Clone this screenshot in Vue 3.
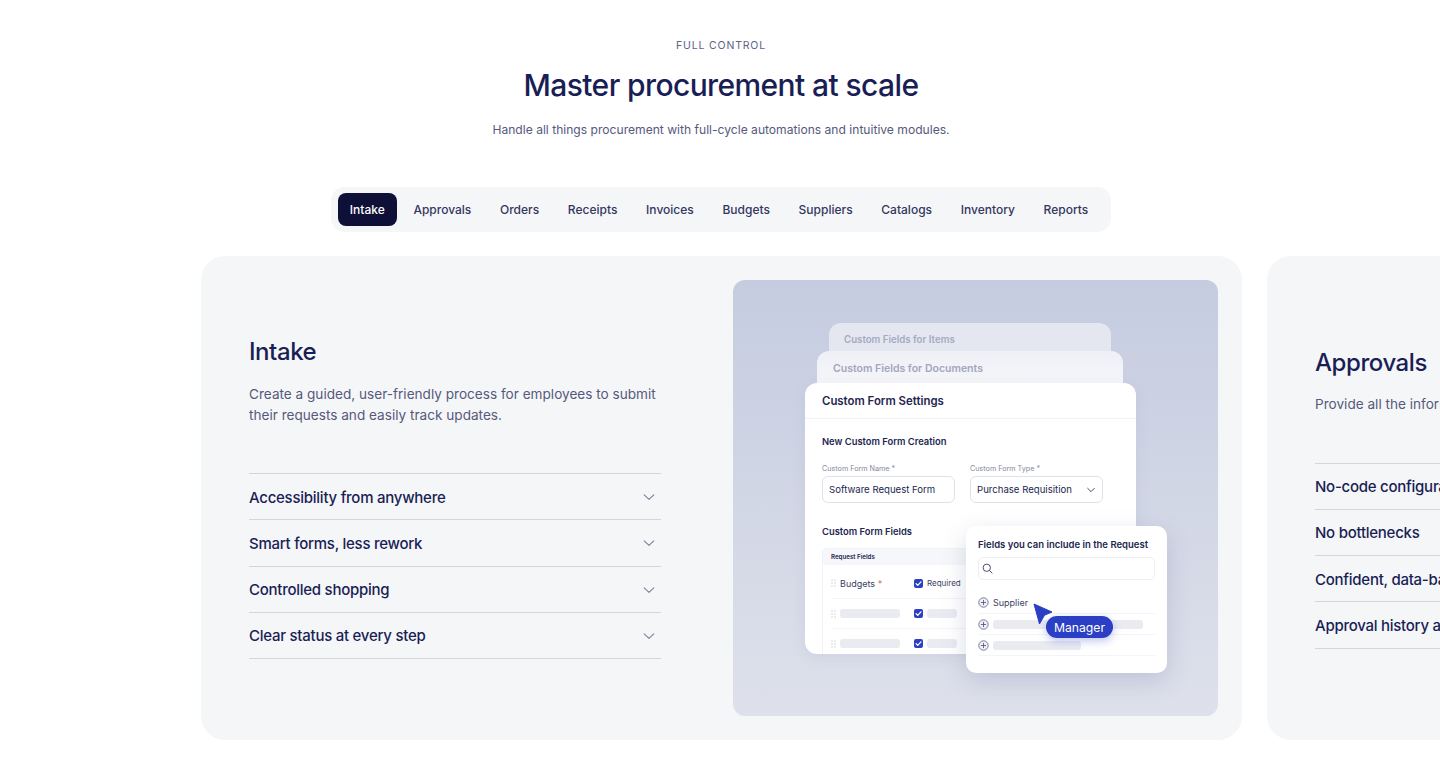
<template>
  <div class="page">
    <div class="top">
      <header class="intro">
        <p class="eyebrow">FULL CONTROL</p>
        <h1>Master procurement at scale</h1>
        <p class="lead">Handle all things procurement with full-cycle automations and intuitive modules.</p>
      </header>

      <nav class="tabs">
        <button v-for="tab in tabs" :key="tab" :class="['tab', { active: tab === activeTab }]">{{ tab }}</button>
      </nav>
    </div>

    <div class="slides">
      <section v-for="slide in slides" :key="slide.title" class="slide">
        <div class="slide-copy">
          <h2>{{ slide.title }}</h2>
          <p class="slide-desc">{{ slide.desc }}</p>
          <ul class="features">
            <li v-for="item in slide.items" :key="item">
              <span>{{ item }}</span>
              <svg class="chev" width="12" height="12" viewBox="0 0 12 12" fill="none">
                <path d="M1.2 3.8L6 8.4l4.8-4.6" stroke="#7d8199" stroke-width="1.1" stroke-linecap="round" stroke-linejoin="round" />
              </svg>
            </li>
          </ul>
        </div>

        <div class="visual">
          <template v-if="slide.title === 'Intake'">
            <div class="back back-items">Custom Fields for Items</div>
            <div class="back back-docs">Custom Fields for Documents</div>

            <div class="form-card">
              <div class="form-head">Custom Form Settings</div>
              <div class="form-body">
                <div class="form-sub">New Custom Form Creation</div>
                <div class="form-row">
                  <div class="field">
                    <label>Custom Form Name *</label>
                    <div class="input">Software Request Form</div>
                  </div>
                  <div class="field">
                    <label>Custom Form Type *</label>
                    <div class="input">
                      Purchase Requisition
                      <svg width="10" height="10" viewBox="0 0 12 12" fill="none">
                        <path d="M2 4l4 4 4-4" stroke="#4a4e6e" stroke-width="1.2" stroke-linecap="round" stroke-linejoin="round" />
                      </svg>
                    </div>
                  </div>
                </div>
                <div class="form-sub fields-title">Custom Form Fields</div>
                <div class="field-table">
                  <div class="table-head">Request Fields</div>
                  <div v-for="(row, i) in 3" :key="row" class="table-row">
                    <svg class="grip" width="5" height="8" viewBox="0 0 5 8" fill="#c6c9d6">
                      <circle cx="1" cy="1" r=".7" /><circle cx="4" cy="1" r=".7" />
                      <circle cx="1" cy="4" r=".7" /><circle cx="4" cy="4" r=".7" />
                      <circle cx="1" cy="7" r=".7" /><circle cx="4" cy="7" r=".7" />
                    </svg>
                    <span v-if="i === 0" class="row-name">Budgets <em>*</em></span>
                    <span v-else class="skel skel-name"></span>
                    <span class="check">
                      <svg width="7" height="7" viewBox="0 0 10 10" fill="none">
                        <path d="M1.5 5.2l2.4 2.4 4.6-5" stroke="#fff" stroke-width="1.8" stroke-linecap="round" stroke-linejoin="round" />
                      </svg>
                    </span>
                    <span v-if="i === 0" class="row-req">Required</span>
                    <span v-else class="skel skel-req"></span>
                  </div>
                </div>
              </div>
            </div>

            <div class="picker">
              <div class="picker-title">Fields you can include in the Request</div>
              <div class="search">
                <svg width="11" height="11" viewBox="0 0 12 12" fill="none">
                  <circle cx="5.2" cy="5.2" r="4" stroke="#3c4060" stroke-width="1" />
                  <path d="M8.2 8.2l2.8 2.8" stroke="#3c4060" stroke-width="1" stroke-linecap="round" />
                </svg>
              </div>
              <div v-for="(opt, i) in pickerRows" :key="i" class="pick-row">
                <svg width="11" height="11" viewBox="0 0 11 11" fill="none">
                  <circle cx="5.5" cy="5.5" r="4.7" fill="#eef0f5" stroke="#6d7190" stroke-width=".9" />
                  <path d="M5.5 3.3v4.4M3.3 5.5h4.4" stroke="#5a5e80" stroke-width=".9" stroke-linecap="round" />
                </svg>
                <span v-if="opt.label" class="pick-label">{{ opt.label }}</span>
                <span v-else class="skel" :style="{ width: opt.bar + 'px' }"></span>
              </div>
              <svg class="cursor" width="20" height="22" viewBox="0 0 20 22">
                <path d="M1 1l18 8-7.5 3.2L6.5 21z" fill="#2a3fc4" stroke="#2a3fc4" stroke-linejoin="round" />
              </svg>
              <span class="tag">Manager</span>
            </div>
          </template>
        </div>
      </section>
    </div>
  </div>
</template>

<script setup>
const activeTab = 'Intake'

const tabs = ['Intake', 'Approvals', 'Orders', 'Receipts', 'Invoices', 'Budgets', 'Suppliers', 'Catalogs', 'Inventory', 'Reports']

const slides = [
  {
    title: 'Intake',
    desc: 'Create a guided, user-friendly process for employees to submit their requests and easily track updates.',
    items: ['Accessibility from anywhere', 'Smart forms, less rework', 'Controlled shopping', 'Clear status at every step']
  },
  {
    title: 'Approvals',
    desc: 'Provide all the information approvers need in one place.',
    items: ['No-code configurable workflows', 'No bottlenecks', 'Confident, data-backed decisions', 'Approval history and audit trail']
  }
]

const pickerRows = [{ label: 'Supplier' }, { bar: 150 }, { bar: 88 }]
</script>

<style>
html,
body {
  margin: 0;
  background: #fff;
  overflow: hidden;
}
</style>

<style scoped>
.page {
  width: 1440px;
  height: 768px;
  overflow: hidden;
  font-family: Inter, "Liberation Sans", sans-serif;
  color: #191e55;
}

.top {
  padding-left: 2px;
}

.intro {
  text-align: center;
  padding-top: 39px;
}

.eyebrow {
  margin: 0;
  font-size: 10.5px;
  line-height: 13px;
  letter-spacing: 0.08em;
  color: #5d6285;
}

h1 {
  margin: 12px 0 0;
  font-size: 30px;
  line-height: 42px;
  font-weight: 500;
  letter-spacing: -0.02em;
}

.lead {
  margin: 14.5px 0 0;
  font-size: 12.1px;
  line-height: 18px;
  color: #55597c;
}

.tabs {
  display: flex;
  width: max-content;
  gap: 4.7px;
  margin: 48.5px auto 0;
  padding: 6px 11px 6px 7px;
  background: #f5f6f8;
  border-radius: 14px;
}

.tab {
  height: 33px;
  padding: 0 12px;
  border: 0;
  border-radius: 8px;
  background: transparent;
  font: 500 12px Inter, sans-serif;
  color: #33375f;
}

.tab.active {
  background: #0e1038;
  color: #fff;
}

.slides {
  display: flex;
  gap: 25px;
  margin-top: 24px;
  padding-left: 201px;
}

.slide {
  flex: none;
  display: flex;
  justify-content: space-between;
  align-items: center;
  box-sizing: border-box;
  width: 1041px;
  height: 484px;
  padding: 24px 24px 24px 48px;
  background: #f5f6f8;
  border-radius: 24px;
}

.slide-copy {
  width: 412px;
  padding-bottom: 1px;
}

h2 {
  margin: 0;
  font-size: 24px;
  line-height: 32px;
  font-weight: 500;
  letter-spacing: -0.018em;
}

.slide-desc {
  margin: 15.5px 0 0;
  font-size: 13.6px;
  line-height: 21px;
  color: #55597c;
}

.features {
  list-style: none;
  margin: 47.5px 0 0;
  padding: 0;
  border-top: 1px solid #d3d5df;
}

.features li {
  display: flex;
  justify-content: space-between;
  align-items: center;
  box-sizing: border-box;
  height: 46.25px;
  padding: 1px 6px 0 0;
  border-bottom: 1px solid #d3d5df;
  font-size: 15px;
  font-weight: 500;
  letter-spacing: -0.017em;
  white-space: nowrap;
}

.visual {
  position: relative;
  flex: none;
  width: 485px;
  height: 436px;
  border-radius: 12px;
  background: linear-gradient(180deg, #c5cce0 0%, #dee1eb 100%);
}

/* the stacked mock-up windows overlap, so they sit on the visual as a canvas */
.back {
  position: absolute;
  box-sizing: border-box;
  font-weight: 600;
  border-radius: 12px 12px 0 0;
}

.back-items {
  left: 96px;
  top: 43px;
  width: 282px;
  height: 40px;
  padding: 10px 15px;
  background: #e4e7f0;
  color: #a6aac2;
  font-size: 9.7px;
  line-height: 13px;
}

.back-docs {
  left: 84px;
  top: 71px;
  width: 306px;
  height: 50px;
  padding: 11px 16px;
  background: linear-gradient(180deg, #eef0f6, #f8f9fb);
  color: #a3a6bd;
  font-size: 10.5px;
  line-height: 14px;
}

.form-card {
  position: absolute;
  left: 72px;
  top: 103px;
  width: 331px;
  height: 271px;
  overflow: hidden;
  background: #fff;
  border-radius: 12px;
  box-shadow: 0 4px 14px rgba(120, 130, 170, 0.12);
  color: #22264f;
}

.form-head {
  height: 35px;
  padding-left: 17px;
  line-height: 36px;
  border-bottom: 1px solid #f1f2f6;
  font-size: 11.4px;
  font-weight: 600;
}

.form-body {
  padding: 17px 17px 0;
}

.form-sub {
  font-size: 9.4px;
  line-height: 12px;
  font-weight: 600;
}

.form-row {
  display: flex;
  gap: 15px;
  margin-top: 16px;
}

.field {
  width: 133px;
}

.field label {
  display: block;
  font-size: 7.2px;
  line-height: 9px;
  color: #85889f;
}

.input {
  display: flex;
  justify-content: space-between;
  align-items: center;
  box-sizing: border-box;
  height: 27px;
  margin-top: 3px;
  padding: 0 6px;
  border: 1px solid #dfe1ea;
  border-radius: 6px;
  font-size: 9.6px;
  white-space: nowrap;
}

.fields-title {
  margin-top: 23px;
}

.field-table {
  width: 200px;
  margin-top: 10px;
  border: 1px solid #f1f2f6;
  border-radius: 4px 0 0 0;
}

.table-head {
  height: 16px;
  padding-left: 8px;
  background: #f6f7fa;
  font-size: 6.2px;
  line-height: 16px;
  font-weight: 600;
}

.table-row {
  display: flex;
  align-items: center;
  height: 29px;
  margin: 0 8px;
  border-bottom: 1px solid #f3f4f7;
}

.table-row:nth-child(2) {
  box-sizing: border-box;
  height: 34px;
  padding-top: 3px;
}

.grip {
  flex: none;
  width: 5px;
  margin-right: 4px;
}

.row-name {
  width: 74px;
  font-size: 9px;
  color: #3b3f63;
}

.row-name em {
  font-style: normal;
  color: #d9694f;
}

.check {
  display: flex;
  align-items: center;
  justify-content: center;
  width: 9px;
  height: 9px;
  margin-right: 4px;
  border-radius: 2px;
  background: #2a3fc4;
}

.row-req {
  font-size: 8px;
  color: #3b3f63;
}

.skel {
  display: block;
  height: 9px;
  border-radius: 3px;
  background: #e9ebf1;
}

.skel-name {
  width: 60px;
  margin-right: 14px;
}

.skel-req {
  width: 30px;
}

.picker {
  position: absolute;
  left: 233px;
  top: 246px;
  box-sizing: border-box;
  width: 201px;
  height: 147px;
  padding: 13px 12px 12px;
  background: #fff;
  border-radius: 10px;
  box-shadow: 0 8px 24px rgba(90, 100, 150, 0.22);
  color: #22264f;
}

.picker-title {
  font-size: 9.5px;
  line-height: 12px;
  font-weight: 600;
  white-space: nowrap;
}

.search {
  display: flex;
  align-items: center;
  box-sizing: border-box;
  width: 177px;
  height: 23px;
  margin-top: 6px;
  padding-left: 3px;
  border: 1px solid #eeeff4;
  border-radius: 5px;
}

.pick-row {
  display: flex;
  align-items: center;
  gap: 4px;
  box-sizing: border-box;
  width: 177px;
  height: 21px;
  border-bottom: 1px solid #f3f4f7;
}

.search + .pick-row {
  height: 22px;
  margin-top: 12px;
}

.pick-label {
  font-size: 9px;
  color: #3b3f63;
}

.cursor {
  position: absolute;
  left: 67px;
  top: 77px;
}

.tag {
  position: absolute;
  left: 80px;
  top: 90px;
  width: 67px;
  height: 22px;
  border-radius: 11px;
  background: #2a3fc4;
  box-shadow: 0 3px 8px rgba(42, 63, 196, 0.3);
  color: #fff;
  font-size: 12.2px;
  line-height: 23px;
  text-align: center;
}
</style>
